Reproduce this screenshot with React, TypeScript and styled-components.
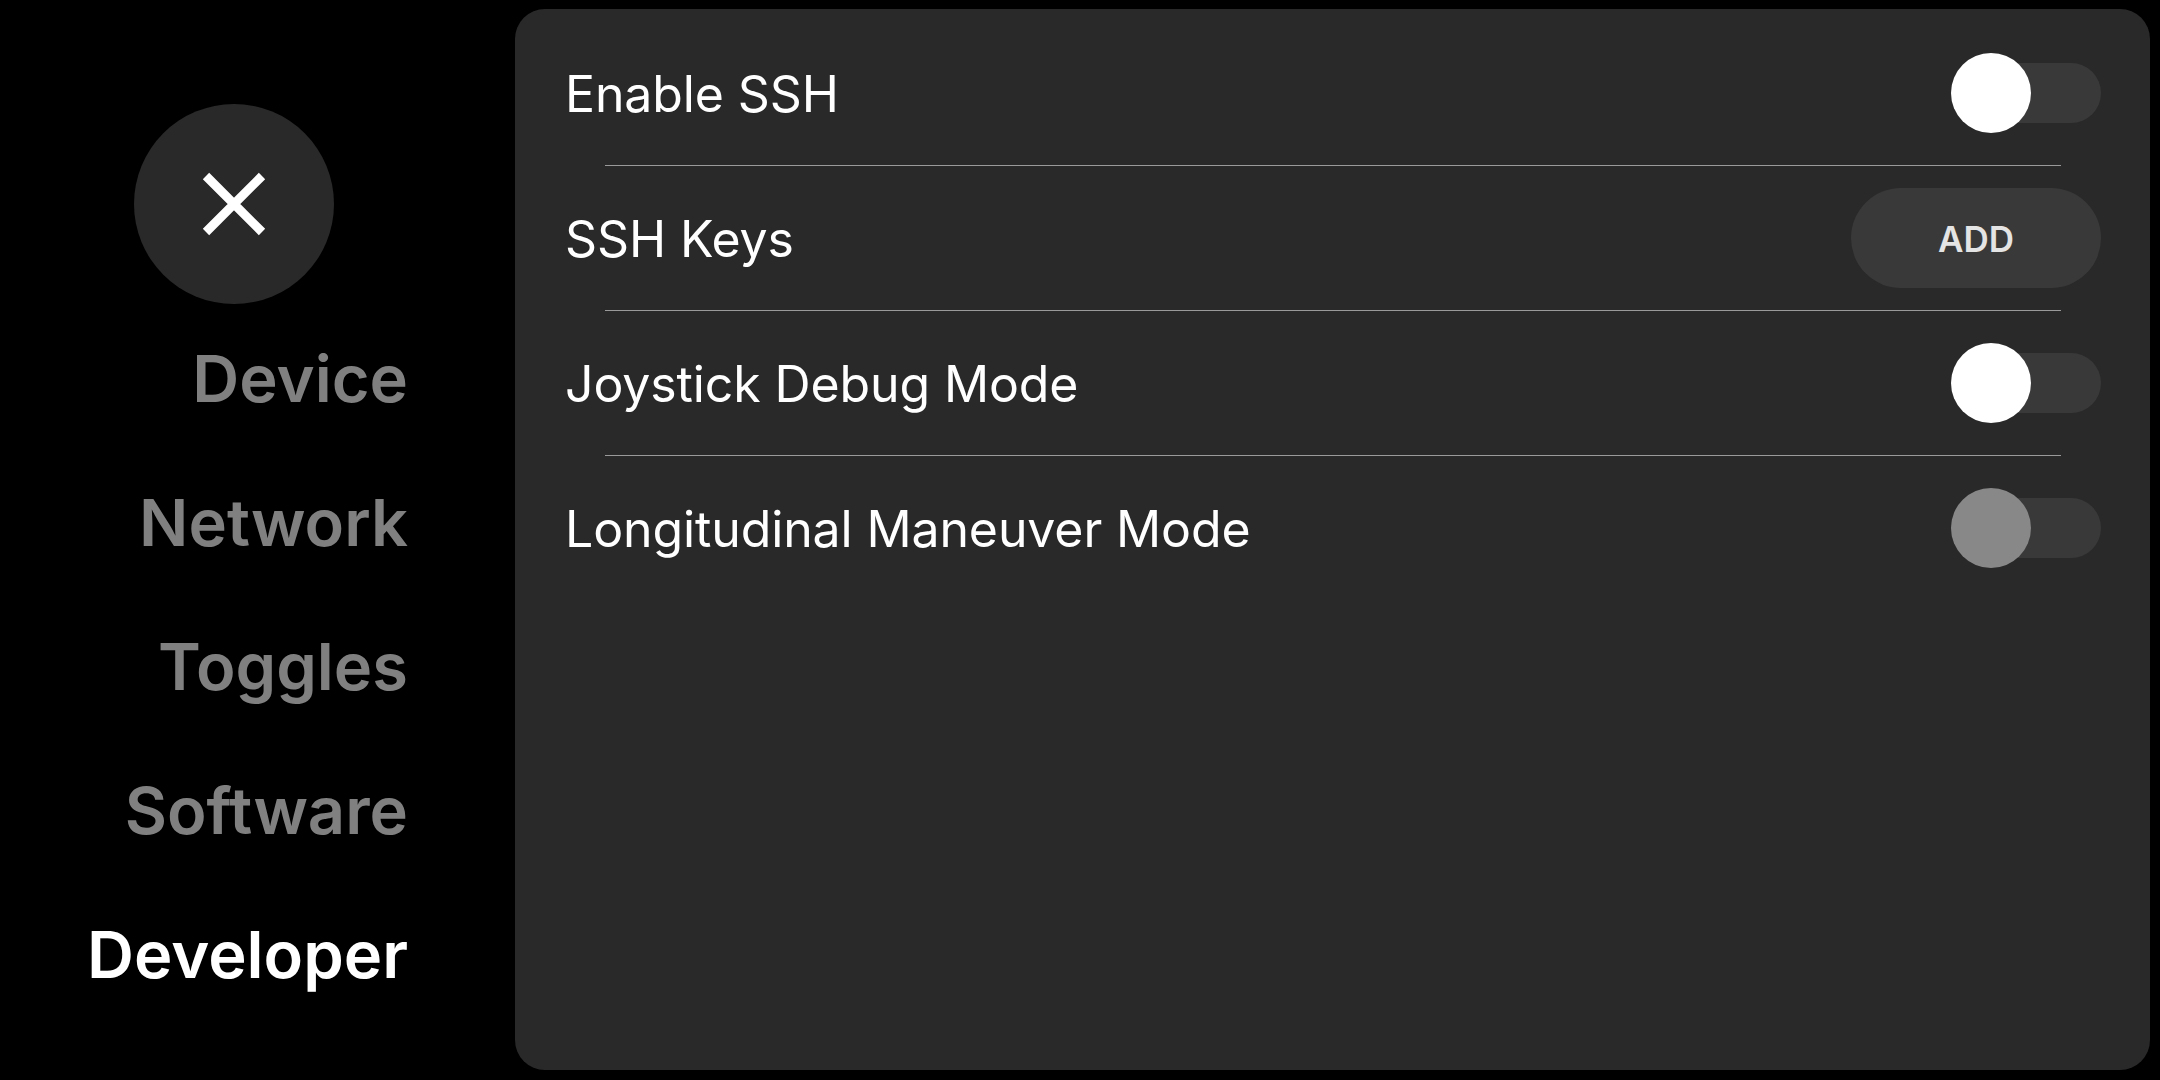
import React, { useState } from 'react';
import styled, { createGlobalStyle } from 'styled-components';

const GlobalStyle = createGlobalStyle`
  html, body {
    margin: 0;
    padding: 0;
    background: #000000;
  }
  body {
    font-family: Inter, "Noto Sans", sans-serif;
  }
`;

const Screen = styled.div`
  display: flex;
  width: 2160px;
  height: 1080px;
  background: #000000;
  box-sizing: border-box;
  padding: 9px 10px 10px 0;
`;

const Sidebar = styled.div`
  width: 515px;
  flex-shrink: 0;
  display: flex;
  flex-direction: column;
  padding-top: 95px;
  box-sizing: border-box;
`;

const CloseButton = styled.button`
  width: 200px;
  height: 200px;
  margin-left: 134px;
  border: none;
  border-radius: 100px;
  background: #292929;
  display: flex;
  align-items: center;
  justify-content: center;
  padding: 0;
  cursor: pointer;
`;

const NavList = styled.div`
  display: flex;
  flex-direction: column;
  padding-top: 2px;
  padding-right: 107px;
`;

const NavItem = styled.div<{ $active?: boolean }>`
  height: 144px;
  display: flex;
  align-items: center;
  justify-content: flex-end;
  font-size: 65px;
  font-weight: 600;
  color: ${(p) => (p.$active ? '#ffffff' : '#808080')};
`;

const Panel = styled.div`
  flex: 1;
  background: #292929;
  border-radius: 30px;
  padding: 12px 49px 0 50px;
  display: flex;
  flex-direction: column;
`;

const Row = styled.div`
  height: 144px;
  display: flex;
  align-items: center;
  justify-content: space-between;
`;

const RowTitle = styled.div`
  font-size: 50px;
  font-weight: 400;
  letter-spacing: -0.12px;
  padding-top: 2px;
  color: #ffffff;
`;

const Divider = styled.div`
  height: 1px;
  margin: 0 40px;
  background: #9a9a9a;
`;

const Track = styled.div<{ $on: boolean }>`
  position: relative;
  width: 150px;
  height: 100px;
  flex-shrink: 0;

  &::before {
    content: '';
    position: absolute;
    left: 0;
    right: 0;
    top: 20px;
    height: 60px;
    border-radius: 30px;
    background: ${(p) => (p.$on ? '#33ab4c' : '#393939')};
  }
`;

const Knob = styled.div<{ $on: boolean; $enabled: boolean }>`
  position: absolute;
  top: 10px;
  left: ${(p) => (p.$on ? '70px' : '0')};
  width: 80px;
  height: 80px;
  border-radius: 40px;
  background: ${(p) => (p.$enabled ? '#ffffff' : '#888888')};
`;

const AddButton = styled.button`
  width: 250px;
  height: 100px;
  border: none;
  border-radius: 50px;
  background: #393939;
  color: #e4e4e4;
  font-family: Inter, "Noto Sans", sans-serif;
  font-size: 35px;
  font-weight: 600;
  padding: 2px 0 0;
  flex-shrink: 0;
  cursor: pointer;
`;

const Toggle: React.FC<{ enabled?: boolean }> = ({ enabled = true }) => {
  const [on, setOn] = useState(false);
  return (
    <Track $on={on} onClick={() => enabled && setOn(!on)}>
      <Knob $on={on} $enabled={enabled} />
    </Track>
  );
};

const CloseIcon = () => (
  <svg width="64" height="64" viewBox="0 0 64 64">
    <path d="M4 4 L60 60 M60 4 L4 60" stroke="#ffffff" strokeWidth="9" strokeLinecap="butt" />
  </svg>
);

const navItems = ['Device', 'Network', 'Toggles', 'Software', 'Developer'];

const App: React.FC = () => {
  return (
    <>
      <GlobalStyle />
      <Screen>
        <Sidebar>
          <CloseButton>
            <CloseIcon />
          </CloseButton>
          <NavList>
            {navItems.map((item) => (
              <NavItem key={item} $active={item === 'Developer'}>
                {item}
              </NavItem>
            ))}
          </NavList>
        </Sidebar>
        <Panel>
          <Row>
            <RowTitle>Enable SSH</RowTitle>
            <Toggle />
          </Row>
          <Divider />
          <Row>
            <RowTitle>SSH Keys</RowTitle>
            <AddButton>ADD</AddButton>
          </Row>
          <Divider />
          <Row>
            <RowTitle>Joystick Debug Mode</RowTitle>
            <Toggle />
          </Row>
          <Divider />
          <Row>
            <RowTitle>Longitudinal Maneuver Mode</RowTitle>
            <Toggle enabled={false} />
          </Row>
        </Panel>
      </Screen>
    </>
  );
};

export default App;
